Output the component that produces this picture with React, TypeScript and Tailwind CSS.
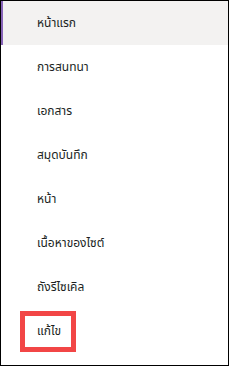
import React from 'react';

const items = ['หน้าแรก', 'การสนทนา', 'เอกสาร', 'สมุดบันทึก', 'หน้า', 'เนื้อหาของไซต์', 'ถังรีไซเคิล', 'แก้ไข'];

export default function App() {
    return (
        <div className="w-[229px] h-[366px] border border-black bg-white overflow-hidden" style={{ fontFamily: '"Noto Sans Thai", "Noto Sans", Tahoma, sans-serif' }}>
            {items.map((label, i) => (
                <div
                    key={label}
                    className={`relative h-[44px] flex items-center pl-[34px] text-[12px] text-[#201f1e] ${i === 0 ? 'bg-[#f3f2f1] border-l-2 border-[#8764b8]' : 'border-l-2 border-transparent'}`}
                >
                    <span>{label}</span>
                    {i === items.length - 1 && (
                        <div className="absolute left-[17px] top-[2px] w-[56px] h-[41px] border-[5px] border-[#f24646]" />
                    )}
                </div>
            ))}
        </div>
    );
}
